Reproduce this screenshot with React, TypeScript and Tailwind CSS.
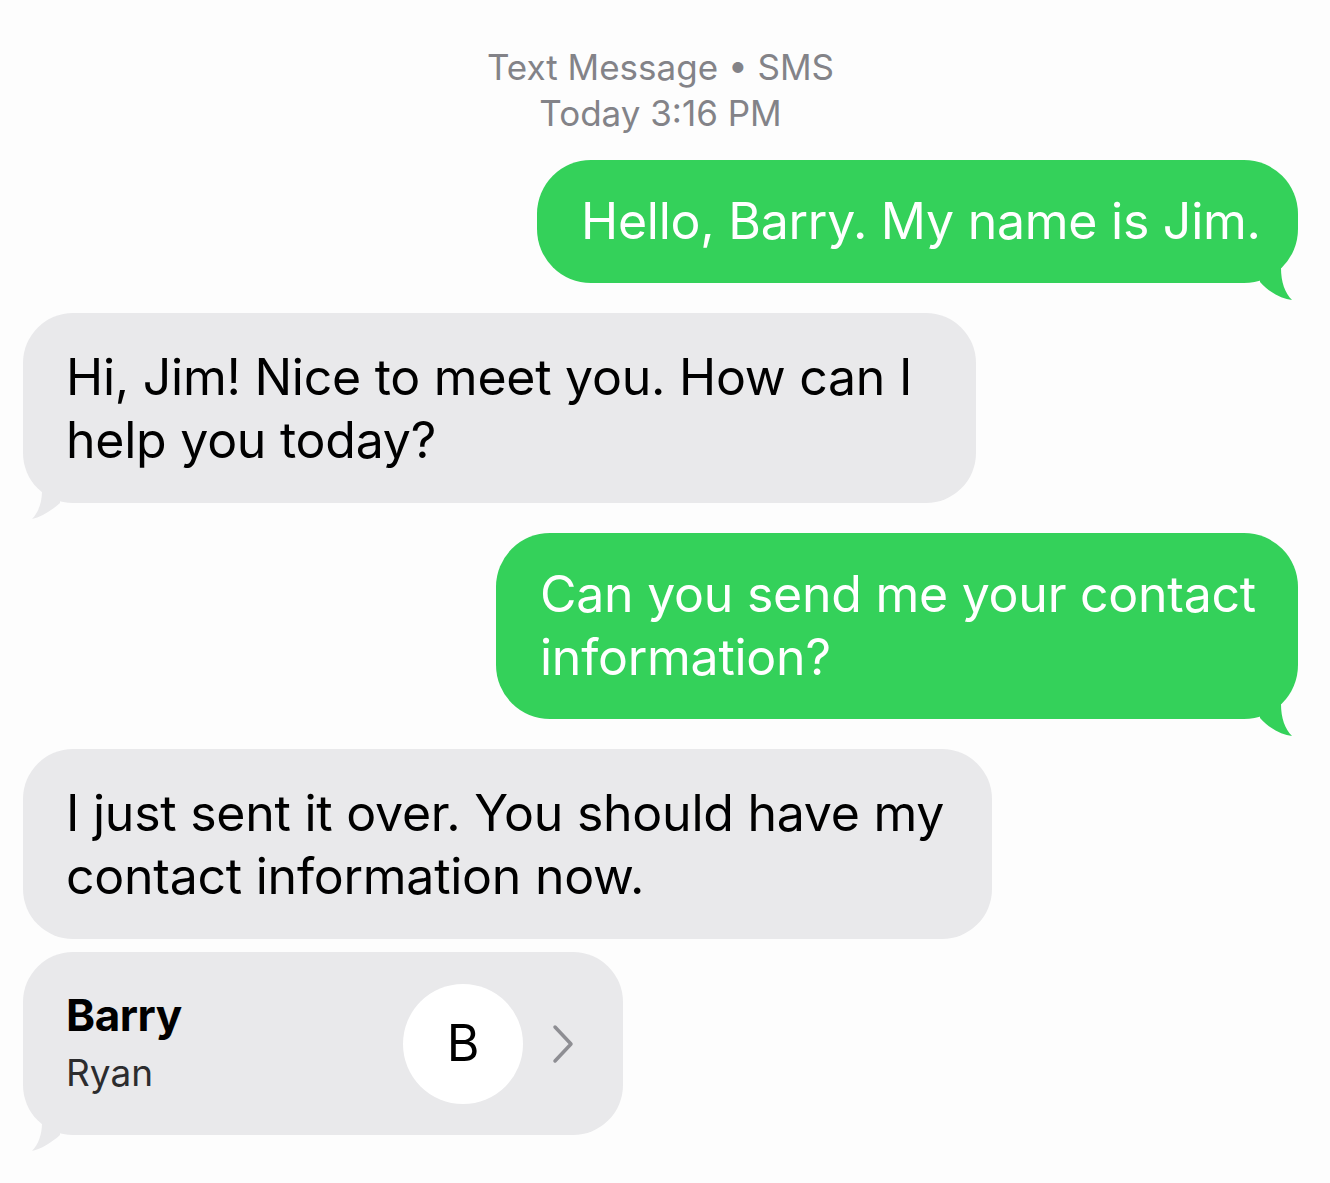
import type { ReactNode } from "react"

const FONT = { fontFamily: 'Inter, "Noto Sans", "Liberation Sans", sans-serif' }

function SentTail() {
  return (
    <svg
      className="absolute right-0 bottom-[-17px] text-[#34d15a]"
      width="48"
      height="40"
      viewBox="0 0 48 40"
      fill="currentColor"
    >
      <path d="M31 0 L31 8 C31 22 35 33 42 40 C32 39 20 33 10 22 L10 0 Z" />
    </svg>
  )
}

function ReceivedTail() {
  return (
    <svg
      className="absolute left-0 bottom-[-16px] text-[#e9e9eb]"
      width="48"
      height="40"
      viewBox="0 0 48 40"
      fill="currentColor"
    >
      <path d="M19 0 L19 12 C19 24 15 34 9 40 C18 38 28 32 37 24 L37 0 Z" />
    </svg>
  )
}

function Sent({ children, width }: { children: ReactNode; width: string }) {
  return (
    <div className={`relative self-end ${width}`}>
      <div className="whitespace-nowrap rounded-[54px] bg-[#34d15a] py-[30px] pl-[44px] pr-[20px] text-[50px] leading-[63px] tracking-[-0.005em] text-white">
        {children}
      </div>
      <SentTail />
    </div>
  )
}

function Received({ children, width, tail = true }: { children: ReactNode; width: string; tail?: boolean }) {
  return (
    <div className={`relative self-start ${width}`}>
      <div className="whitespace-nowrap rounded-[50px] bg-[#e9e9eb] pt-[33px] pb-[31px] pl-[43px] pr-[20px] text-[50px] leading-[63px] tracking-[-0.005em] text-black">
        {children}
      </div>
      {tail && <ReceivedTail />}
    </div>
  )
}

export default function App() {
  return (
    <div className="min-h-screen bg-[#fdfdfd] pl-[23px] pr-[32px] pt-[44px]" style={FONT}>
      <div className="flex flex-col items-center text-[35px] leading-[46px] text-[#838388]">
        <div>Text Message • SMS</div>
        <div>Today 3:16 PM</div>
      </div>

      <div className="mt-[24px] flex flex-col">
        <Sent width="w-[761px]">Hello, Barry. My name is Jim.</Sent>

        <div className="mt-[30px]">
          <Received width="w-[953px]">
            Hi, Jim! Nice to meet you. How can I<br />
            help you today?
          </Received>
        </div>

        <div className="mt-[30px] flex flex-col">
          <Sent width="w-[802px]">
            Can you send me your contact<br />
            information?
          </Sent>
        </div>

        <div className="mt-[30px]">
          <Received width="w-[969px]" tail={false}>
            I just sent it over. You should have my<br />
            contact information now.
          </Received>
        </div>

        <div className="relative mt-[13px] w-[600px]">
          <div className="flex h-[183px] items-center rounded-[50px] bg-[#e9e9eb] pl-[43px] pr-[48px]">
            <div className="flex flex-1 flex-col">
              <span className="text-[44px] font-bold leading-[58px] tracking-[-0.01em] text-black">Barry</span>
              <span className="text-[37px] leading-[58px] text-[#2c2c2e]">Ryan</span>
            </div>
            <div className="flex h-[120px] w-[120px] items-center justify-center rounded-full bg-white text-[50px] text-black">
              B
            </div>
            <svg className="ml-[28px] text-[#8e8e93]" width="24" height="40" viewBox="0 0 24 40" fill="none">
              <path d="M4 3 L20 20 L4 37" stroke="currentColor" strokeWidth="3.5" strokeLinecap="round" strokeLinejoin="round" />
            </svg>
          </div>
          <ReceivedTail />
        </div>
      </div>
    </div>
  )
}
